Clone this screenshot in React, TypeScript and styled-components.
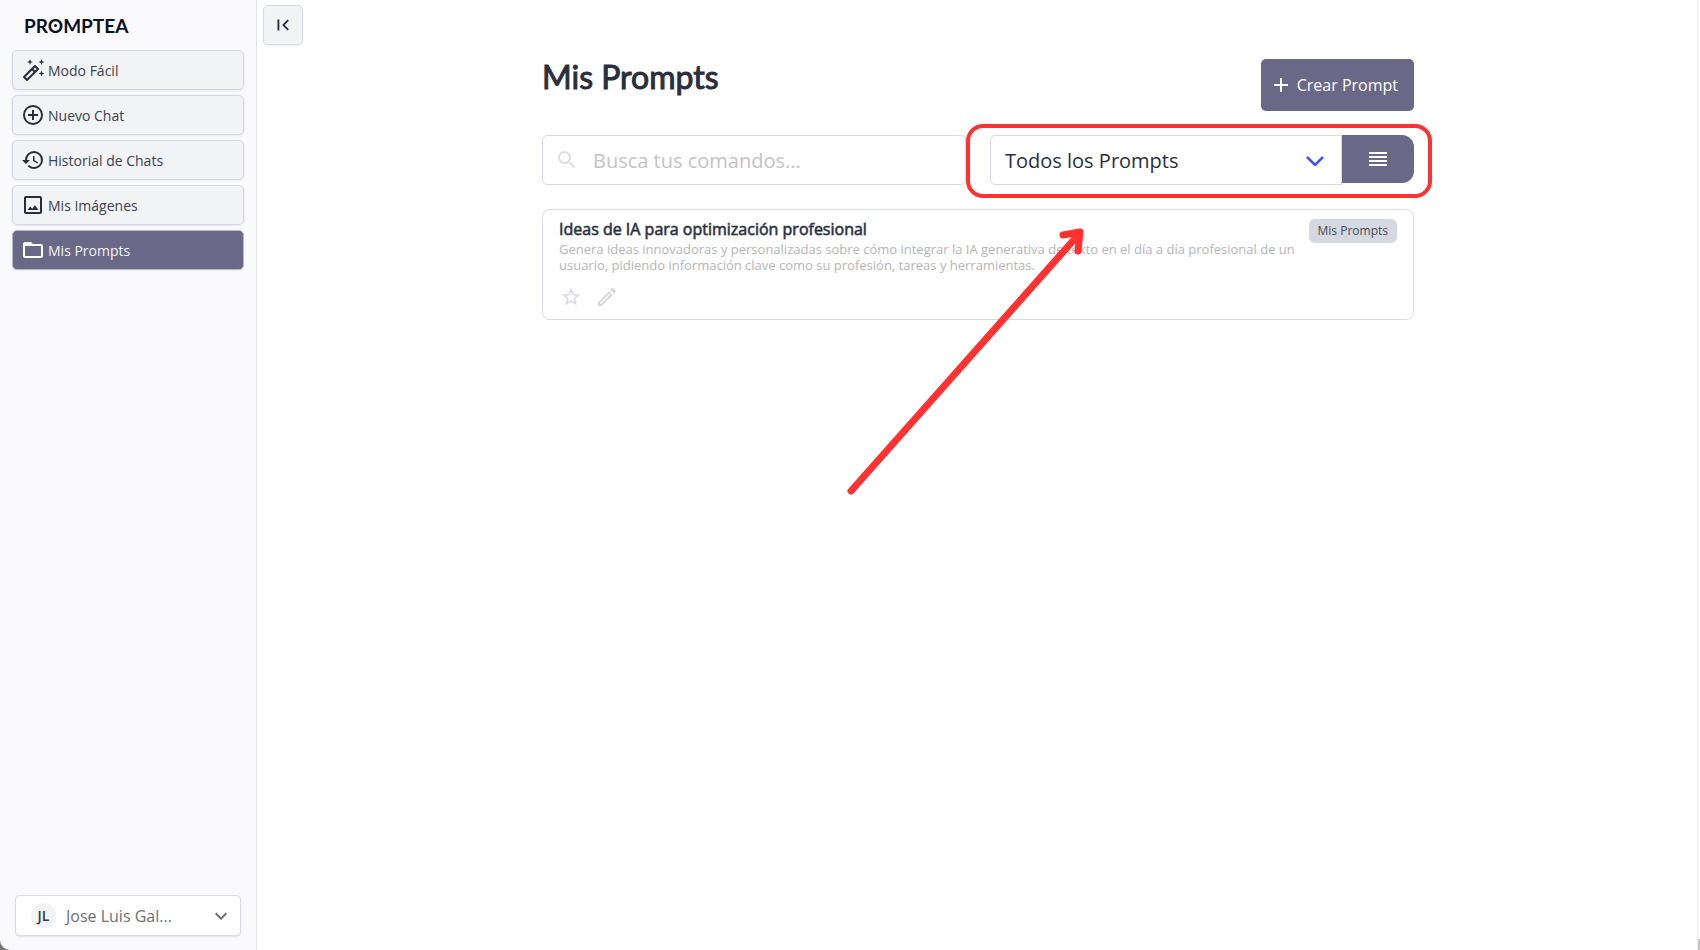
import React from "react";
import styled, { createGlobalStyle, css } from "styled-components";

const Global = createGlobalStyle`
  *, *::before, *::after { box-sizing: border-box; }
  body { margin: 0; background: #fff; color: #2b2f3c; font-family: "Open Sans", sans-serif; font-size: 14px; }
  button, input, select { font-family: inherit; color: inherit; }
  h1, h2, p { margin: 0; }
`;

const accent = "#696886";
const line = "#d9dae3";
const red = "#ff3131";

const Shell = styled.div`
  display: flex;
  min-height: 100vh;
  background: #77777a;
`;

const Sidebar = styled.aside`
  display: flex;
  flex-direction: column;
  width: 257px;
  flex-shrink: 0;
  padding: 14px 12px 14px;
  background: #fafafd;
  border-right: 1px solid #e4e4ec;
  border-bottom-left-radius: 10px;
`;

const Brand = styled.a`
  align-self: flex-start;
  margin: 0 0 12px 12px;
  font-family: Lato, sans-serif;
  font-size: 19px;
  font-weight: 700;
  line-height: 24px;
  color: #0b1020;
  text-decoration: none;
`;

const DottedLetter = styled.span`
  position: relative;
  &::after {
    content: "";
    position: absolute;
    inset: 0;
    width: 3px;
    height: 3px;
    margin: auto;
    border-radius: 50%;
    background: currentColor;
  }
`;

const Nav = styled.nav`
  display: flex;
  flex-direction: column;
  gap: 5px;
`;

const NavButton = styled.button<{ $active?: boolean }>`
  display: flex;
  align-items: center;
  gap: 3px;
  height: 40px;
  padding: 0 8px;
  border: 1px solid #d3d6e0;
  border-radius: 5px;
  background: #f2f3f5;
  box-shadow: 0 1px 2px rgba(30, 30, 60, 0.08);
  font-size: 14px;
  color: #3c414d;
  ${(p) => p.$active && css`
    background: ${accent};
    border-color: #b9b9cb;
    color: #f3f3f7;
  `}
`;

const Icon = styled.svg<{ $size?: number }>`
  width: ${(p) => p.$size ?? 24}px;
  height: ${(p) => p.$size ?? 24}px;
  flex-shrink: 0;
  fill: currentColor;
`;

const NavIcon = styled(Icon)<{ $active?: boolean }>`
  color: ${(p) => (p.$active ? "#fff" : "#282d38")};
`;

const Account = styled.button`
  display: flex;
  align-items: center;
  height: 41px;
  margin: auto 3px 0;
  padding: 0 7px 0 15px;
  border: 1px solid ${line};
  border-radius: 5px;
  background: #fff;
  box-shadow: 0 1px 2px rgba(30, 30, 60, 0.1);
  font-size: 16px;
  color: #6f6f73;
`;

const Avatar = styled.span`
  display: grid;
  place-items: center;
  width: 25px;
  height: 25px;
  margin-right: 10px;
  border-radius: 50%;
  background: #f2f3f5;
  font-size: 14px;
  font-weight: 600;
  color: #343b4b;
`;

const AccountName = styled.span`
  flex: 1;
  text-align: left;
`;

const Main = styled.main`
  display: flex;
  flex: 1;
  flex-direction: column;
  min-width: 0;
  padding: 5px 4px 5px 6px;
  background: #fff;
`;

const Rail = styled.div`
  display: flex;
  flex-direction: column;
  justify-content: flex-end;
  width: 3px;
  background: #fafafa;
  border-left: 1px solid #efefef;
`;

const RailCorner = styled.div`
  height: 11px;
  background: #c4c4c4;
`;

const Collapse = styled.button`
  display: grid;
  place-items: center;
  width: 40px;
  height: 40px;
  padding: 0;
  border: 1px solid ${line};
  border-radius: 5px;
  background: #f2f3f5;
  box-shadow: 0 1px 2px rgba(30, 30, 60, 0.08);
  color: #282d38;
`;

const Content = styled.div`
  position: relative;
  width: 100%;
  max-width: 872px;
  margin: 14px auto 0;
`;

const Header = styled.header`
  display: flex;
  justify-content: space-between;
  align-items: flex-start;
`;

const Title = styled.h1`
  font-family: Lato, sans-serif;
  font-size: 32px;
  font-weight: 400;
  line-height: 36px;
  -webkit-text-stroke: 1px currentColor;
`;

const Create = styled.button`
  display: flex;
  align-items: center;
  gap: 4px;
  height: 52px;
  padding: 0 16px 0 8px;
  border: 0;
  border-radius: 5px;
  background: ${accent};
  color: #fff;
  font-size: 16px;
`;

const Toolbar = styled.div`
  display: flex;
  gap: 24px;
  margin: 24px 0;
`;

const Search = styled.label`
  display: flex;
  align-items: center;
  flex: 1;
  gap: 14px;
  height: 50px;
  padding: 0 12px;
  border: 1px solid ${line};
  border-radius: 5px;
  color: #dcdde6;
`;

const SearchInput = styled.input`
  flex: 1;
  min-width: 0;
  padding: 0;
  border: 0;
  outline: 0;
  background: none;
  font-size: 20px;
  color: #2b2f3c;
  &::placeholder { color: #c3c3c7; opacity: 1; }
`;

const Filter = styled.div`
  position: relative;
  display: flex;
  align-items: flex-start;
  width: 424px;
`;

const Highlight = styled.div`
  position: absolute;
  inset: -11px -18px -13px -24px;
  border: 4px solid ${red};
  border-radius: 17px;
  pointer-events: none;
`;

const SelectBox = styled.div`
  display: grid;
  flex: 1;
  align-items: center;
  & > * { grid-area: 1 / 1; }
`;

const SelectArrow = styled.svg`
  justify-self: end;
  width: 18px;
  height: 12px;
  margin-right: 18px;
  fill: none;
  stroke: #4353ff;
  stroke-width: 2.5;
  pointer-events: none;
`;

const Select = styled.select`
  width: 100%;
  height: 50px;
  padding: 0 14px;
  appearance: none;
  border: 1px solid ${line};
  border-radius: 5px 0 0 5px;
  background: #fff;
  font-size: 20px;
`;

const ViewToggle = styled.button`
  display: grid;
  place-items: center;
  width: 72px;
  height: 48px;
  padding: 0;
  border: 0;
  border-radius: 0 12px 12px 0;
  background: ${accent};
  color: #fff;
`;

const Card = styled.article`
  display: flex;
  justify-content: space-between;
  align-items: flex-start;
  padding: 8px 16px 10px;
  border: 1px solid ${line};
  border-radius: 8px;
`;

const CardBody = styled.div`
  max-width: 740px;
`;

const CardTitle = styled.h2`
  margin-bottom: 1px;
  font-size: 16px;
  font-weight: 400;
  line-height: 22px;
  -webkit-text-stroke: 1px rgba(43, 47, 60, 0.6);
`;

const CardText = styled.p`
  font-size: 13px;
  line-height: 16px;
  color: #b5b5b8;
`;

const Actions = styled.div`
  display: flex;
  gap: 12px;
  margin-top: 12px;
`;

const IconButton = styled.button`
  display: grid;
  place-items: center;
  width: 24px;
  height: 24px;
  padding: 0;
  border: 0;
  background: none;
  color: #d6d7e1;
`;

const Tag = styled.span`
  margin-top: 1px;
  padding: 0 9px;
  border-radius: 6px;
  background: #d5d8e0;
  font-size: 12px;
  line-height: 24px;
  color: #454a59;
`;

const Arrow = styled.svg`
  position: absolute;
  top: 165px;
  left: 300px;
  width: 250px;
  height: 280px;
  fill: none;
  stroke: ${red};
  stroke-width: 7;
  stroke-linecap: round;
  stroke-linejoin: round;
  pointer-events: none;
`;

const paths = {
  plus: "M12 20C7.59 20 4 16.41 4 12S7.59 4 12 4 20 7.59 20 12 16.41 20 12 20M12 2A10 10 0 0 0 2 12 10 10 0 0 0 12 22 10 10 0 0 0 22 12 10 10 0 0 0 12 2M13 7H11V11H7V13H11V17H13V13H17V11H13V7Z",
  history: "M13.5 8H12V13L16.28 15.54 17 14.33 13.5 12.25V8M13 3A9 9 0 0 0 4 12H1L4.96 16.03 9 12H6A7 7 0 0 1 13 5 7 7 0 0 1 20 12 7 7 0 0 1 13 19C11.07 19 9.32 18.21 8.06 16.94L6.64 18.36C8.27 20 10.5 21 13 21A9 9 0 0 0 22 12 9 9 0 0 0 13 3",
  image: "M19 3H5C3.9 3 3 3.9 3 5V19C3 20.1 3.9 21 5 21H19C20.1 21 21 20.1 21 19V5C21 3.9 20.1 3 19 3M19 19H5V5H19V19M13.96 12.29 11.21 15.83 9.25 13.47 6.5 17H17.5L13.96 12.29Z",
  folder: "M20 18H4V8H20M20 6H12L10 4H4C2.89 4 2 4.89 2 6V18A2 2 0 0 0 4 20H20A2 2 0 0 0 22 18V8C22 6.89 21.1 6 20 6Z",
  chevron: "M7.41 8.58 12 13.17 16.59 8.58 18 10 12 16 6 10 7.41 8.58Z",
  collapse: "M18.41 7.41 17 6 11 12 17 18 18.41 16.59 13.83 12 18.41 7.41M6 6H8V18H6V6Z",
  add: "M19 13H13V19H11V13H5V11H11V5H13V11H19V13Z",
  search: "M9.5 3A6.5 6.5 0 0 1 16 9.5C16 11.11 15.41 12.59 14.44 13.73L14.71 14H15.5L20.5 19 19 20.5 14 15.5V14.71L13.73 14.44C12.59 15.41 11.11 16 9.5 16A6.5 6.5 0 0 1 3 9.5 6.5 6.5 0 0 1 9.5 3M9.5 5C7 5 5 7 5 9.5S7 14 9.5 14 14 12 14 9.5 12 5 9.5 5Z",
  lines: "M3 5H21V7H3V5M3 9H21V11H3V9M3 13H21V15H3V13M3 17H21V19H3V17Z",
  star: "M12 15.39 8.24 17.66 9.23 13.38 5.91 10.5 10.29 10.13 12 6.09 13.71 10.13 18.09 10.5 14.77 13.38 15.76 17.66M22 9.24 14.81 8.63 12 2 9.19 8.63 2 9.24 7.45 13.97 5.82 21 12 17.27 18.18 21 16.54 13.97 22 9.24Z",
  pencil: "M14.06 9 15 9.94 5.92 19H5V18.08L14.06 9M17.66 3C17.41 3 17.15 3.1 16.96 3.29L15.13 5.12 18.88 8.87 20.71 7.04C21.1 6.65 21.1 6 20.71 5.63L18.37 3.29C18.17 3.09 17.92 3 17.66 3M14.06 6.19 3 17.25V21H6.75L17.81 9.94 14.06 6.19Z",
};

type GlyphName = keyof typeof paths;

function Glyph({ name, size }: { name: GlyphName; size?: number }) {
  return <Icon $size={size} viewBox="0 0 24 24" aria-hidden="true"><path d={paths[name]} /></Icon>;
}

function Wand() {
  return (
    <>
      <g fill="none" stroke="currentColor" strokeWidth="2" strokeLinejoin="round">
        <path d="M3 19 14 8 17 11 6 22Z" />
        <path d="M11 11 14 14" />
      </g>
      <path d="M9 1 9.8 3.2 12 4 9.8 4.8 9 7 8.2 4.8 6 4 8.2 3.2ZM20.5 1 21.3 3.2 23.5 4 21.3 4.8 20.5 7 19.7 4.8 17.5 4 19.7 3.2ZM20.5 12.5 21.3 14.7 23.5 15.5 21.3 16.3 20.5 18.5 19.7 16.3 17.5 15.5 19.7 14.7Z" />
    </>
  );
}

const items: { icon: GlyphName | "wand"; label: string; active?: boolean }[] = [
  { icon: "wand", label: "Modo Fácil" },
  { icon: "plus", label: "Nuevo Chat" },
  { icon: "history", label: "Historial de Chats" },
  { icon: "image", label: "Mis Imágenes" },
  { icon: "folder", label: "Mis Prompts", active: true },
];

export default function App() {
  return (
    <>
      <Global />
      <Shell>
        <Sidebar>
          <Brand href="#">PR<DottedLetter>O</DottedLetter>MPTEA</Brand>
          <Nav>
            {items.map((item) => (
              <NavButton key={item.label} type="button" $active={item.active}>
                <NavIcon viewBox="0 0 24 24" $active={item.active} aria-hidden="true">
                  {item.icon === "wand" ? <Wand /> : <path d={paths[item.icon]} />}
                </NavIcon>
                {item.label}
              </NavButton>
            ))}
          </Nav>
          <Account type="button">
            <Avatar>JL</Avatar>
            <AccountName>Jose Luis Gal...</AccountName>
            <Glyph name="chevron" />
          </Account>
        </Sidebar>
        <Main>
          <Collapse type="button" aria-label="Contraer menú"><Glyph name="collapse" size={22} /></Collapse>
          <Content>
            <Header>
              <Title>Mis Prompts</Title>
              <Create type="button"><Glyph name="add" />Crear Prompt</Create>
            </Header>
            <Toolbar>
              <Search>
                <Glyph name="search" />
                <SearchInput type="search" aria-label="Buscar" placeholder="Busca tus comandos..." />
              </Search>
              <Filter>
                <SelectBox>
                  <Select aria-label="Filtrar prompts">
                    <option>Todos los Prompts</option>
                  </Select>
                  <SelectArrow viewBox="0 0 18 12" aria-hidden="true"><path d="M1 3 9 11 17 3" /></SelectArrow>
                </SelectBox>
                <ViewToggle type="button" aria-label="Vista de lista"><Glyph name="lines" /></ViewToggle>
                <Highlight />
              </Filter>
            </Toolbar>
            <Card>
              <CardBody>
                <CardTitle>Ideas de IA para optimización profesional</CardTitle>
                <CardText>
                  Genera ideas innovadoras y personalizadas sobre cómo integrar la IA generativa de texto en el día a día
                  profesional de un usuario, pidiendo información clave como su profesión, tareas y herramientas.
                </CardText>
                <Actions>
                  <IconButton type="button" aria-label="Favorito"><Glyph name="star" size={22} /></IconButton>
                  <IconButton type="button" aria-label="Editar"><Glyph name="pencil" /></IconButton>
                </Actions>
              </CardBody>
              <Tag>Mis Prompts</Tag>
            </Card>
            <Arrow viewBox="0 0 250 280" aria-hidden="true">
              <path d="M9 267 237 10M221 11 238 8 236 27" />
            </Arrow>
          </Content>
        </Main>
        <Rail><RailCorner /></Rail>
      </Shell>
    </>
  );
}
